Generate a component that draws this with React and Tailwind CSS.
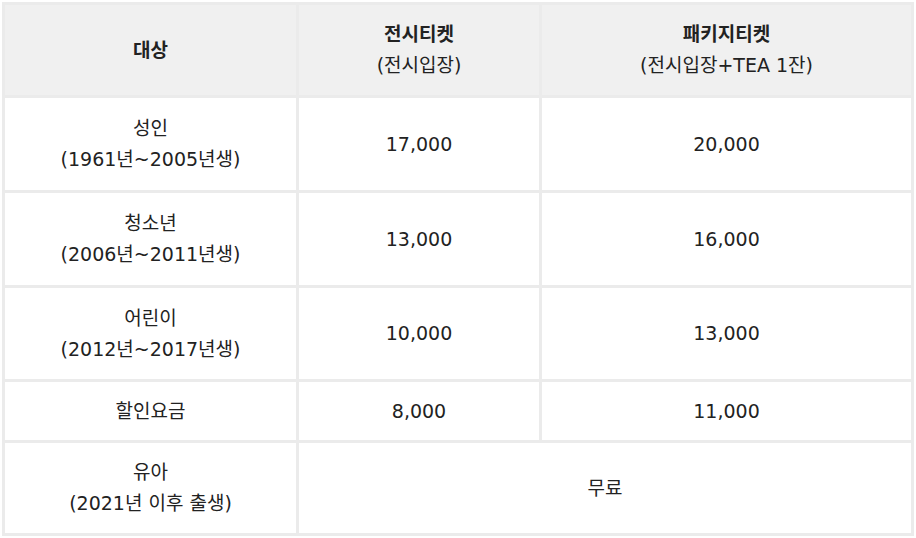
import React from 'react';

const rows = [
  { label: ['성인', '(1961년~2005년생)'], exhibit: '17,000', pack: '20,000' },
  { label: ['청소년', '(2006년~2011년생)'], exhibit: '13,000', pack: '16,000' },
  { label: ['어린이', '(2012년~2017년생)'], exhibit: '10,000', pack: '13,000' },
  { label: ['할인요금'], exhibit: '8,000', pack: '11,000' },
];

function Cell({ className = '', children }) {
  return (
    <div className={'flex flex-col items-center justify-center text-center ' + className}>
      {children}
    </div>
  );
}

export default function App() {
  return (
    <div
      className="w-[916px] h-[538px] bg-white p-[2px] text-[19px] leading-[31px] text-[#222]"
      style={{ fontFamily: '"DejaVu Sans", "Noto Sans CJK KR", sans-serif' }}
    >
      <div className="grid grid-cols-[291px_240px_369px] grid-rows-[90px_92px_92px_91px_58px_90px] gap-[3px] bg-[#ebebeb] p-[3px]">
        <Cell className="bg-[#f0f0f0] font-bold">대상</Cell>
        <Cell className="bg-[#f0f0f0]">
          <span className="font-bold">전시티켓</span>
          <span>(전시입장)</span>
        </Cell>
        <Cell className="bg-[#f0f0f0]">
          <span className="font-bold">패키지티켓</span>
          <span>(전시입장+TEA 1잔)</span>
        </Cell>

        {rows.map((r, i) => (
          <React.Fragment key={i}>
            <Cell className="bg-white">
              {r.label.map((l, j) => (
                <span key={j}>{l}</span>
              ))}
            </Cell>
            <Cell className="bg-white">{r.exhibit}</Cell>
            <Cell className="bg-white">{r.pack}</Cell>
          </React.Fragment>
        ))}

        <Cell className="bg-white">
          <span>유아</span>
          <span>(2021년 이후 출생)</span>
        </Cell>
        <Cell className="bg-white col-span-2">무료</Cell>
      </div>
    </div>
  );
}
